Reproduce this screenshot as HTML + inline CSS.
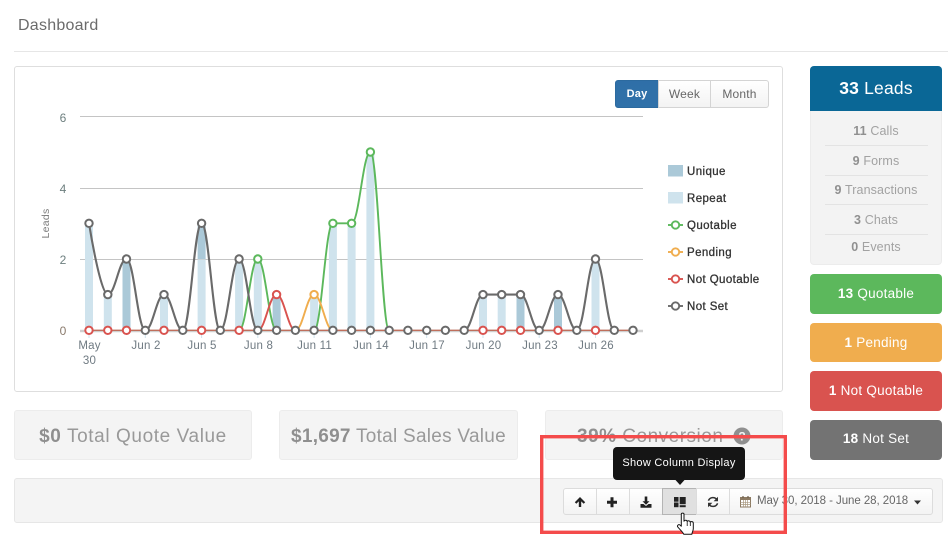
<!DOCTYPE html>
<html><head><meta charset="utf-8"><title>Dashboard</title>
<style>
html,body{margin:0;padding:0;background:#fff}
body{width:948px;height:540px;position:relative;overflow:hidden;font-family:"Liberation Sans",sans-serif}
.a{position:absolute;box-sizing:border-box}
.t{position:absolute;white-space:nowrap;text-align:center}
b{font-weight:700}
.panel{background:#f4f4f4;border:1px solid #ececec;border-radius:3px}
.stat{font-size:19px;color:#999;text-align:center;line-height:51px;letter-spacing:.6px;white-space:nowrap;overflow:hidden}
.stat b{color:#8f8f8f}
.side{left:810px;width:132px;border-radius:4px;color:#fff;text-align:center;font-size:13.5px;letter-spacing:.25px;white-space:nowrap}
.row{left:810px;width:132px;text-align:center;color:#a2a2a2;font-size:12.5px;letter-spacing:.12px;line-height:16px;position:absolute;white-space:nowrap}
.row b{color:#909090}
.hr{position:absolute;left:825px;width:103px;height:1px;background:#e3e3e3}
.seg{position:absolute;top:80px;height:28px;border:1px solid #d4d4d4;background:linear-gradient(#fff,#f3f3f3);font-size:12px;color:#666;text-align:center;line-height:26px;box-sizing:border-box;letter-spacing:.2px}
.tb{position:absolute;top:488px;height:27px;box-sizing:border-box;border:1px solid #dcdcdc;background:linear-gradient(#fff,#f3f3f3)}
</style></head>
<body>
<div class="t" style="left:18px;top:17px;font-size:16px;line-height:18px;color:#6b6b6b;letter-spacing:.25px">Dashboard</div>
<div class="a" style="left:14px;top:51px;width:934px;height:1px;background:#e6e6e6"></div>

<div class="a" style="left:14px;top:66px;width:769px;height:326px;border:1px solid #dedede;border-radius:3px;background:#fff"></div>

<div class="seg" style="left:615px;width:44px;background:linear-gradient(#2f6fa8,#3071a9);border-color:#2c6a9f;color:#fff;border-radius:3px 0 0 3px;font-weight:700;font-size:11px">Day</div>
<div class="seg" style="left:658px;width:53px">Week</div>
<div class="seg" style="left:710px;width:59px;border-radius:0 3px 3px 0">Month</div>

<svg class="a" style="left:0;top:0" width="948" height="540" viewBox="0 0 948 540">
<g fill="none" stroke="#c4c4c4" stroke-width="1">
<path d="M80 116.500H643M80 188.500H643M80 259.500H643"/>
</g>
<path d="M80 331H643" stroke="#cfcfcf" stroke-width="2.400" fill="none"/>
<g stroke="#cfe3ed" stroke-width="1" fill="none">
<path d="M89 332V338M145.300 332V338M201.600 332V338M257.800 332V338M314.100 332V338M370.400 332V338M426.700 332V338M483 332V338M539.200 332V338M595.500 332V338"/>
</g>
<g fill="#cfe3ed">
<rect x="85" y="223.300" width="8" height="107"/>
<rect x="103.800" y="294.600" width="8" height="35.700"/>
<rect x="160" y="294.600" width="8" height="35.700"/>
<rect x="197.600" y="259.500" width="8" height="70.800"/>
<rect x="235.100" y="259" width="8" height="71.300"/>
<rect x="253.800" y="259" width="8" height="71.300"/>
<rect x="310.100" y="294.600" width="8" height="35.700"/>
<rect x="328.900" y="223.300" width="8" height="107"/>
<rect x="347.600" y="223.300" width="8" height="107"/>
<rect x="366.400" y="152" width="8" height="178.300"/>
<rect x="479" y="294.600" width="8" height="35.700"/>
<rect x="497.700" y="294.600" width="8" height="35.700"/>
<rect x="591.500" y="259" width="8" height="71.300"/>
</g>
<g fill="#abc9d8">
<rect x="122.500" y="259" width="8" height="71.300"/>
<rect x="197.600" y="223.300" width="8" height="35.700"/>
<rect x="272.600" y="294.600" width="8" height="35.700"/>
<rect x="516.500" y="294.600" width="8" height="35.700"/>
<rect x="554" y="294.600" width="8" height="35.700"/>
</g>
<g fill="none" stroke-width="1.900">
<path stroke="#5cb85c" d="M239.100 330.300C246.600 330.300 250.300 259 257.800 259C265.300 259 269.100 330.300 276.600 330.300M314.100 330.300C321.600 330.300 325.400 223.300 332.900 223.300L351.600 223.300C359.100 223.300 362.900 152 370.400 152C377.900 152 381.700 330.300 389.200 330.300"/>
<path stroke="#f0ad4e" d="M295.400 330.300C302.900 330.300 306.600 294.600 314.100 294.600C321.600 294.600 325.400 330.300 332.900 330.300"/>
<path stroke="#d9534f" d="M257.800 330.300C265.300 330.300 269.100 294.600 276.600 294.600C284.100 294.600 287.900 330.300 295.400 330.300"/>
<path stroke="#bf6f5c" stroke-width="1.400" d="M89 330.300L633 330.300"/>
<path stroke="#6a6a6a" stroke-width="2.100" d="M89 223.300C89 223.300 100.300 294.600 107.800 294.600C115.300 294.600 119 259 126.500 259C134 259 137.800 330.300 145.300 330.300C152.800 330.300 156.500 294.600 164 294.600C171.500 294.600 175.300 330.300 182.800 330.300C190.300 330.300 194.100 223.300 201.600 223.300C209.100 223.300 212.800 330.300 220.300 330.300C227.800 330.300 231.600 259 239.100 259C246.600 259 250.300 330.300 257.800 330.300"/>
<path stroke="#6a6a6a" stroke-width="2.100" d="M464.200 330.300C471.700 330.300 475.500 294.600 483 294.600L520.500 294.600C528 294.600 531.700 330.300 539.200 330.300C546.700 330.300 550.500 294.600 558 294.600C565.500 294.600 569.300 330.300 576.800 330.300C584.300 330.300 588 259 595.500 259C603 259 606.800 330.300 614.300 330.300"/>
</g>
<g fill="#fff" stroke="#5cb85c" stroke-width="2">
<circle cx="257.800" cy="259" r="3.700"/><circle cx="332.900" cy="223.300" r="3.700"/><circle cx="351.600" cy="223.300" r="3.700"/><circle cx="370.400" cy="152" r="3.700"/>
</g>
<circle cx="314.100" cy="294.600" r="3.700" fill="#fff" stroke="#f0ad4e" stroke-width="2"/>
<g fill="#fff" stroke="#d9534f" stroke-width="2">
<circle cx="276.600" cy="294.600" r="3.700"/>
<circle cx="89" cy="330.300" r="3.700"/><circle cx="107.800" cy="330.300" r="3.700"/><circle cx="126.500" cy="330.300" r="3.700"/><circle cx="164" cy="330.300" r="3.700"/><circle cx="201.600" cy="330.300" r="3.700"/><circle cx="239.100" cy="330.300" r="3.700"/><circle cx="483" cy="330.300" r="3.700"/><circle cx="501.700" cy="330.300" r="3.700"/><circle cx="520.500" cy="330.300" r="3.700"/><circle cx="558" cy="330.300" r="3.700"/><circle cx="595.500" cy="330.300" r="3.700"/>
</g>
<g fill="#fff" stroke="#6a6a6a" stroke-width="2">
<circle cx="89" cy="223.300" r="3.700"/><circle cx="107.800" cy="294.600" r="3.700"/><circle cx="126.500" cy="259" r="3.700"/><circle cx="145.300" cy="330.300" r="3.700"/><circle cx="164" cy="294.600" r="3.700"/><circle cx="182.800" cy="330.300" r="3.700"/><circle cx="201.600" cy="223.300" r="3.700"/><circle cx="220.300" cy="330.300" r="3.700"/><circle cx="239.100" cy="259" r="3.700"/><circle cx="257.800" cy="330.300" r="3.700"/><circle cx="276.600" cy="330.300" r="3.700"/><circle cx="295.400" cy="330.300" r="3.700"/><circle cx="314.100" cy="330.300" r="3.700"/><circle cx="332.900" cy="330.300" r="3.700"/><circle cx="351.600" cy="330.300" r="3.700"/><circle cx="370.400" cy="330.300" r="3.700"/><circle cx="389.200" cy="330.300" r="3.700"/><circle cx="407.900" cy="330.300" r="3.700"/><circle cx="426.700" cy="330.300" r="3.700"/><circle cx="445.400" cy="330.300" r="3.700"/><circle cx="464.200" cy="330.300" r="3.700"/><circle cx="483" cy="294.600" r="3.700"/><circle cx="501.700" cy="294.600" r="3.700"/><circle cx="520.500" cy="294.600" r="3.700"/><circle cx="539.200" cy="330.300" r="3.700"/><circle cx="558" cy="294.600" r="3.700"/><circle cx="576.800" cy="330.300" r="3.700"/><circle cx="595.500" cy="259" r="3.700"/><circle cx="614.300" cy="330.300" r="3.700"/><circle cx="633" cy="330.300" r="3.700"/>
</g>
<g font-family="Liberation Sans, sans-serif" font-size="12" fill="#6d7f7f">
<text x="63" y="122" text-anchor="middle">6</text>
<text x="63" y="193" text-anchor="middle">4</text>
<text x="63" y="264" text-anchor="middle">2</text>
<text x="63" y="335" text-anchor="middle" fill="#8a7a6c">0</text>
</g>
<text transform="translate(49,223.500) rotate(-90)" text-anchor="middle" font-family="Liberation Sans, sans-serif" font-size="10.500" fill="#7b7b7b" letter-spacing=".3">Leads</text>
<g font-family="Liberation Sans, sans-serif" font-size="11.500" fill="#6f7a82" text-anchor="middle" letter-spacing=".2">
<text x="89.500" y="349">May</text><text x="89.500" y="364">30</text>
<text x="146" y="349">Jun 2</text><text x="202" y="349">Jun 5</text><text x="258.500" y="349">Jun 8</text><text x="314.500" y="349">Jun 11</text><text x="371" y="349">Jun 14</text><text x="427" y="349">Jun 17</text><text x="483.500" y="349">Jun 20</text><text x="540" y="349">Jun 23</text><text x="596" y="349">Jun 26</text>
</g>
<rect x="668" y="165" width="15" height="11.500" fill="#abc9d8"/>
<rect x="668" y="192" width="15" height="11.500" fill="#cfe3ed"/>
<g fill="#fff" stroke-width="1.900">
<path d="M668 225H683" stroke="#5cb85c"/><circle cx="675.500" cy="225" r="3.700" stroke="#5cb85c"/>
<path d="M668 252H683" stroke="#f0ad4e"/><circle cx="675.500" cy="252" r="3.700" stroke="#f0ad4e"/>
<path d="M668 279H683" stroke="#d9534f"/><circle cx="675.500" cy="279" r="3.700" stroke="#d9534f"/>
<path d="M668 306H683" stroke="#6a6a6a"/><circle cx="675.500" cy="306" r="3.700" stroke="#6a6a6a"/>
</g>
<g font-family="Liberation Sans, sans-serif" font-size="11.500" fill="#333" stroke="#333" stroke-width=".3" letter-spacing=".4">
<text x="687" y="175">Unique</text><text x="687" y="202">Repeat</text><text x="687" y="229">Quotable</text><text x="687" y="256">Pending</text><text x="687" y="283">Not Quotable</text><text x="687" y="310">Not Set</text>
</g>
</svg>

<div class="a" style="left:810px;top:66px;width:132px;height:199px;background:#f3f3f3;border:1px solid #ececec;border-radius:4px"></div>
<div class="a" style="left:810px;top:66px;width:132px;height:45px;background:#0a6796;border-radius:4px 4px 0 0;color:#fff;font-size:17.500px;line-height:45px;text-align:center;letter-spacing:.2px"><b>33</b> Leads</div>
<div class="row" style="top:123px"><b>11</b> Calls</div><div class="hr" style="top:145px"></div>
<div class="row" style="top:153px"><b>9</b> Forms</div><div class="hr" style="top:175px"></div>
<div class="row" style="top:182px"><b>9</b> Transactions</div><div class="hr" style="top:204px"></div>
<div class="row" style="top:212px"><b>3</b> Chats</div><div class="hr" style="top:234px"></div>
<div class="row" style="top:239px"><b>0</b> Events</div>

<div class="a side" style="top:274px;height:40px;line-height:39px;background:#5cb85c"><b>13</b> Quotable</div>
<div class="a side" style="top:323px;height:39px;line-height:39px;background:#f0ad4e"><b>1</b> Pending</div>
<div class="a side" style="top:371px;height:40px;line-height:39px;background:#d9534f"><b>1</b> Not Quotable</div>
<div class="a side" style="top:420px;height:40px;line-height:38px;background:#737373"><b>18</b> Not Set</div>

<div class="a panel stat" style="left:14px;top:410px;width:238px;height:50px"><b>$0</b> Total Quote Value</div>
<div class="a panel stat" style="left:279px;top:410px;width:239px;height:50px;letter-spacing:.27px"><b>$1,697</b> Total Sales Value</div>
<div class="a panel stat" style="left:545px;top:410px;width:238px;height:50px;text-align:left;padding-left:31px;letter-spacing:.5px"><b>39%</b> Conversion</div>
<svg class="a" style="left:733px;top:427px" width="18" height="18" viewBox="0 0 18 18"><circle cx="9" cy="9" r="8.500" fill="#8f8f8f"/><text x="9" y="13.500" text-anchor="middle" font-family="Liberation Sans, sans-serif" font-size="12" font-weight="700" fill="#f4f4f4">?</text></svg>

<div class="a panel" style="left:14px;top:478px;width:929px;height:45px;border-color:#e6e6e6"></div>

<div class="tb" style="left:563px;width:34px;border-radius:3px 0 0 3px"></div>
<div class="tb" style="left:596px;width:34px"></div>
<div class="tb" style="left:629px;width:34px"></div>
<div class="tb" style="left:662px;width:35px;background:#e0e0e0;border-color:#b4b4b4"></div>
<div class="tb" style="left:696px;width:34px"></div>
<div class="tb" style="left:729px;width:204px;border-radius:0 3px 3px 0"></div>
<div class="t" style="left:757px;top:494px;font-size:11.500px;line-height:15px;color:#666;letter-spacing:-.06px">May 30, 2018 - June 28, 2018</div>

<div class="a" style="left:613px;top:447px;width:132px;height:33px;background:#151515;border-radius:4px;color:#fff;font-size:11px;line-height:32px;text-align:center;white-space:nowrap;letter-spacing:.3px">Show Column Display</div>

<svg class="a" style="left:0;top:0" width="948" height="540" viewBox="0 0 948 540">
<path d="M675.500 480H684.500L680 485Z" fill="#151515"/>
<g fill="#222">
<path d="M580 497L585.200 502.300L583.700 503.800L581.200 501.400V507H578.800V501.400L576.300 503.800L574.800 502.300Z"/>
<path d="M610.500 497.200H613.500V500.700H617V503.700H613.500V507.200H610.500V503.700H607V500.700H610.500Z"/>
<path d="M644.700 496.500H647.300V501.200H649.500L646 504.700L642.500 501.200H644.700Z"/>
<path d="M640.500 504H643.500L646 506L648.500 504H651.500V507.800H640.500Z"/>
<rect x="674" y="497" width="4.500" height="4.700"/><rect x="674" y="502.500" width="4.500" height="4.700"/>
<rect x="679.700" y="497" width="6" height="7.200"/><rect x="679.700" y="505.200" width="6" height="2"/>
<path d="M914 500.500H921L917.500 504.500Z" fill="#333"/>
</g>
<g fill="none" stroke="#333" stroke-width="1.500">
<path d="M708.400 500.700A4.900 4.900 0 0 1 717 499.700"/>
<path d="M717.600 503.300A4.900 4.900 0 0 1 709 504.300"/>
</g>
<path d="M718 496.800V501.200H713.600ZM708 507.200V502.800H712.400Z" fill="#333"/>
<g>
<rect x="740.500" y="497.500" width="10" height="9.500" fill="#fff" stroke="#8c7a62" stroke-width="1"/>
<path d="M740.500 497.500H750.500V500H740.500Z" fill="#8c7a62"/>
<path d="M743 496V498M748 496V498" stroke="#6c5d4a" stroke-width="1.200"/>
<path d="M743.500 500V507M745.500 500V507M747.500 500V507M740.500 502.300H750.500M740.500 504.600H750.500" stroke="#a8987f" stroke-width=".7"/>
</g>
<rect x="541.700" y="436.700" width="243.600" height="95.600" fill="none" stroke="#f44b4b" stroke-width="3.400"/>
<path d="M681.300 514.300C681.300 512.800 684 512.800 684 514.300V521.200C684.500 519.800 687 519.900 687.200 521.500C687.800 520.400 690 520.600 690.300 522.100C691 521.200 693.200 521.500 693.300 523.100V528.500C693.300 531 692 532.500 691.800 534.300H683.800C683 532.200 679.700 529.400 677.800 527C676.800 525.500 678.500 524 680 525L681.300 526.200Z" fill="#fff" stroke="#111" stroke-width="1" stroke-linejoin="round"/>
<path d="M687.200 521.500V526M690.300 522.100V526" stroke="#111" stroke-width=".8" fill="none"/>
</svg>
</body></html>
